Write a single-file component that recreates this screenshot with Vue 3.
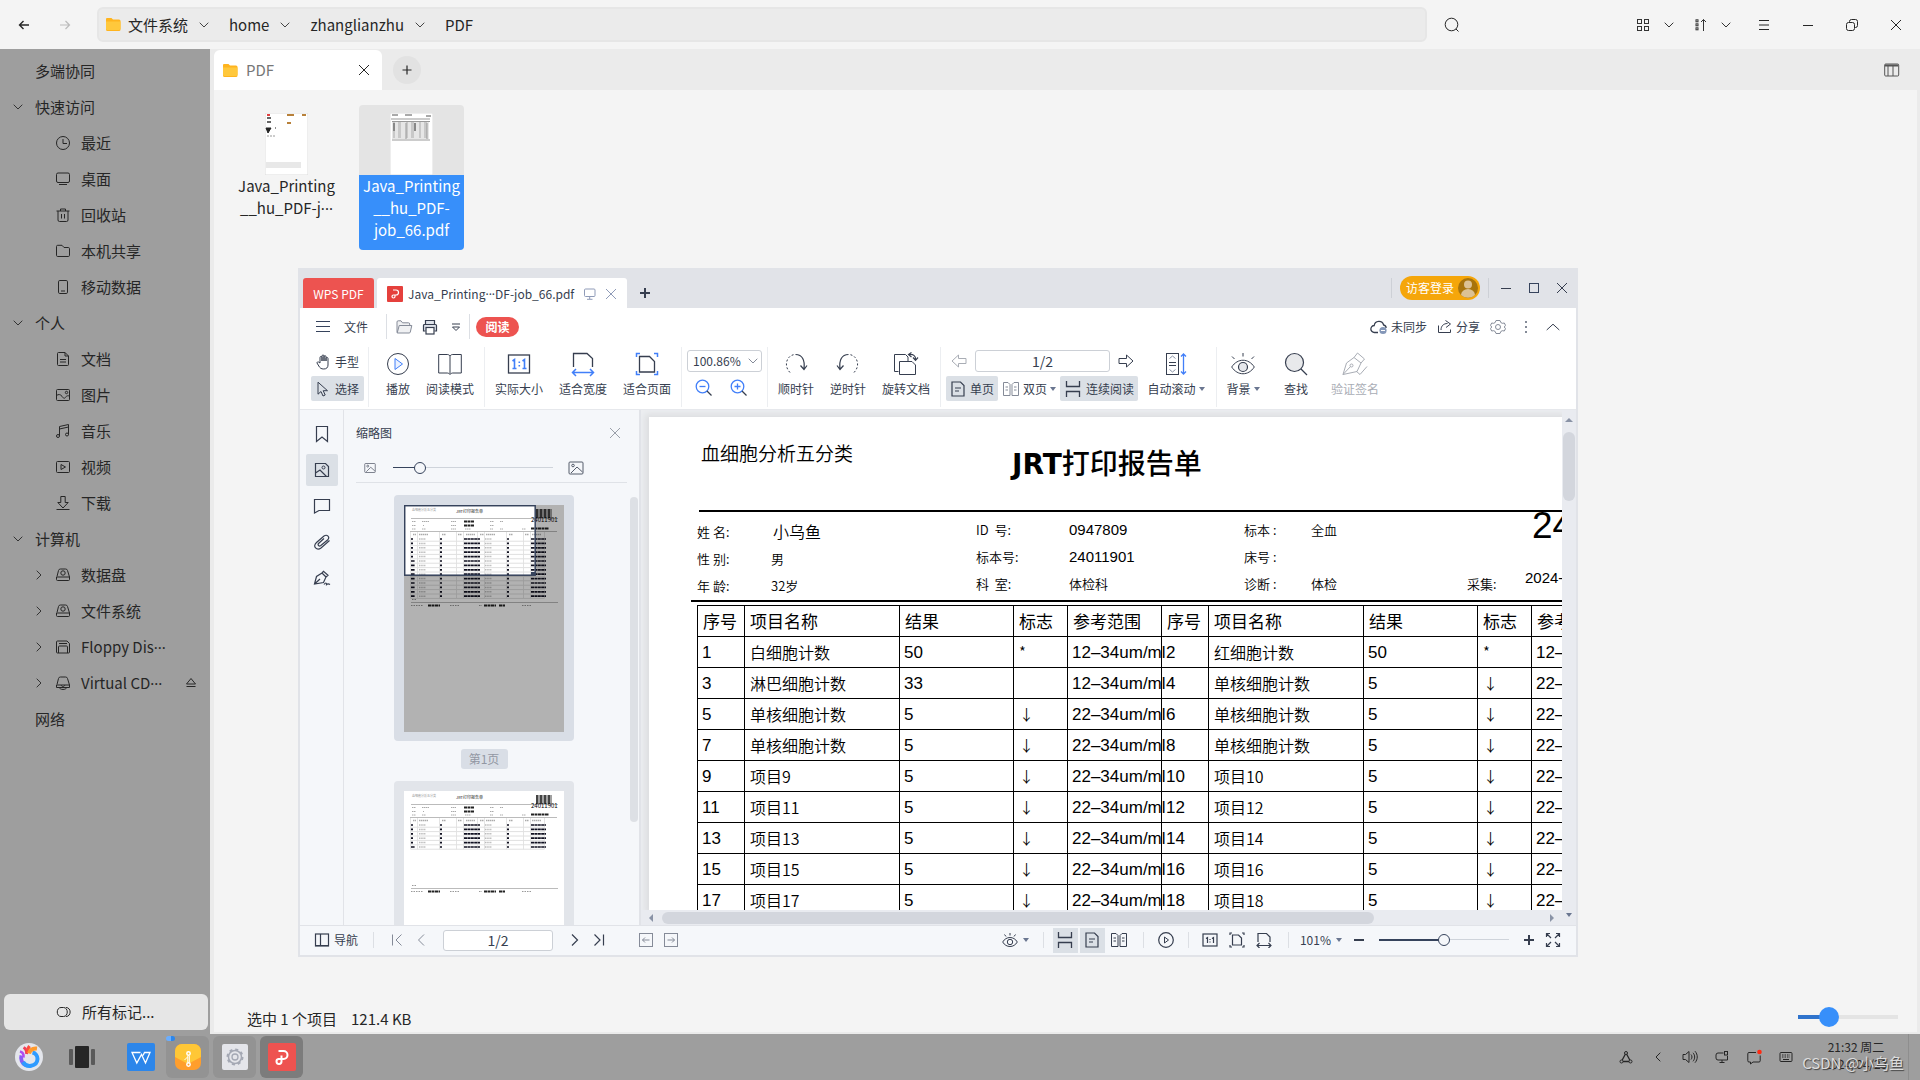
<script setup>
import { h } from 'vue'

const icons = {
  back: [14, 14, '<path d="M2.5 7H12M6.5 3 2.5 7l4 4" stroke-width="1.4"/>'],
  forward: [14, 14, '<path d="M11.5 7H2M7.500 3l4 4-4 4" stroke-width="1.2"/>'],
  down: [10, 6, '<path d="M.7.7 5 5 9.300.7"/>'],
  right: [6, 10, '<path d="M.7.7 5 5 .7 9.300"/>'],
  left: [6, 10, '<path d="M5.300.7 1 5l4.300 4.300"/>'],
  folder: [15, 13, '<path d="M1 0h4.500l1.500 1.500H13a1.500 1.500 0 0 1 1.500 1.500v8.500A1.500 1.500 0 0 1 13 13H1.500A1.500 1.500 0 0 1 0 11.500V1a1 1 0 0 1 1-1z" fill="#ffb41e" stroke="none"/><path d="M0 3.500h14.500v7A2 2 0 0 1 13 12H1.500A1.500 1.500 0 0 1 0 10.500z" fill="#ffc83c" stroke="none"/>'],
  search: [16, 16, '<circle cx="7.500" cy="7.500" r="6.300"/><path d="m12 12 2.500 2.500"/>'],
  grid: [14, 14, '<rect x="1.500" y="1.500" width="4" height="4"/><rect x="8.500" y="1.500" width="4" height="4"/><rect x="1.500" y="8.500" width="4" height="4"/><rect x="8.500" y="8.500" width="4" height="4"/>'],
  sort: [12, 14, '<rect x="1" y="1.800" width="2" height="2"/><rect x="1" y="5.800" width="2" height="2"/><rect x="1" y="9.800" width="2" height="2"/><path d="M8.500 13V1.500M6 4l2.500-2.500L11 4"/>'],
  menu: [12, 12, '<path d="M1 1.500h10M1 6h10M1 10.500h10" stroke-width="1.200"/>'],
  min: [12, 12, '<path d="M1 6.500h10"/>'],
  restore: [14, 14, '<rect x="1.500" y="4.500" width="8" height="8" rx="2"/><path d="M4.500 4.500v-1a2 2 0 0 1 2-2h4a2 2 0 0 1 2 2v4a2 2 0 0 1-2 2h-1"/>'],
  close: [12, 12, '<path d="m1 1 10 10M11 1 1 11"/>'],
  plus: [12, 12, '<path d="M6 1.500v9M1.500 6h9" stroke-width="1.200"/>'],
  columns: [16, 14, '<rect x=".7" y="1" width="14" height="12" rx="1"/><path d="M1 2.500h13" stroke-width="2"/><path d="M4 3v10M9 3v10"/>'],
  clock: [16, 16, '<circle cx="8" cy="8" r="6.500"/><path d="M8 4v4.500h4"/>'],
  desktop: [16, 16, '<rect x="1.500" y="2" width="13" height="9.500" rx="1.500"/><path d="M4 13.500h8"/>'],
  trash: [16, 16, '<path d="M1.500 4h13M5.500 4V2h5v2M3 4v9a1.500 1.500 0 0 0 1.500 1.500h7A1.500 1.500 0 0 0 13 13V4M6.500 7v4.500M9.500 7v4.500"/>'],
  share: [16, 16, '<path d="M1.500 3.500a1.200 1.200 0 0 1 1.200-1.200H7L9 4.500h4.300a1.200 1.200 0 0 1 1.200 1.200v6.600a1.200 1.200 0 0 1-1.200 1.200H2.700a1.200 1.200 0 0 1-1.200-1.200z"/>'],
  phone: [16, 16, '<rect x="3.500" y="1.500" width="9" height="13" rx="1.300"/><path d="M6 12h4"/>'],
  doc: [16, 16, '<path d="M2.500 2.500a1 1 0 0 1 1-1H10L13.500 5v8.500a1 1 0 0 1-1 1h-9a1 1 0 0 1-1-1zM10 1.500V5h3.500M5 8.500h6M5 11h6"/>'],
  image: [16, 16, '<rect x="1.500" y="2.500" width="13" height="11" rx="1"/><path d="M1.500 8.500c2-1.500 4-1.200 5.500.8s2 2.700 3.500 1 2.500-2 4-1"/><circle cx="11.500" cy="5.500" r="1.200"/>'],
  music: [16, 16, '<circle cx="3" cy="13" r="1.500"/><circle cx="12" cy="11.500" r="1.500"/><path d="M4.500 13V3.500l9-2v10M4.500 6l9-2"/>'],
  video: [16, 16, '<rect x="1.500" y="2.500" width="13" height="11" rx="1"/><path d="M6 5.500v5l4.500-2.500z"/>'],
  download: [16, 16, '<path d="M5.800 1.500h4.400v6h3L8 13 2.800 7.500h3zM1.500 14.500h13"/>'],
  disk: [16, 16, '<path d="m2 9.500 1.500-6A2 2 0 0 1 5.500 2h5a2 2 0 0 1 2 1.500L14.500 10v2.500a1 1 0 0 1-1 1h-11a1 1 0 0 1-1-1V10h13"/><circle cx="8" cy="6" r="2.200"/>'],
  floppy: [16, 16, '<path d="M1.500 3a1 1 0 0 1 1-1H12l2.500 2.500V13a1 1 0 0 1-1 1h-11a1 1 0 0 1-1-1zM3.500 14V8a1 1 0 0 1 1-1h7a1 1 0 0 1 1 1v6M4 4.500h8"/>'],
  cd: [16, 16, '<path d="m2 9.500 1.500-6A2 2 0 0 1 5.500 2h5a2 2 0 0 1 2 1.500l2 6.500v2.500h-13V10h13M4 12.500c1.500 2.600 6.500 2.600 8 0M6 10c1 2 3 2 4 0"/>'],
  eject: [12, 12, '<path d="m6 1.500 4.500 5.500h-9zM1.500 9.500h9"/>'],
  tags: [16, 12, '<path d="M5 1.500h2.500c5 0 5 9 0 9H5c-5 0-5-9 0-9zM10 1.500c5.500 0 5.500 9 0 9"/>'],
  wpsLogo: [16, 16, '<rect width="16" height="16" rx="1" fill="#e5403c" stroke="none"/><path d="M6 4h3a2.500 2.500 0 0 1 0 5H6.500a1.500 1.500 0 1 0 1.500 1.500V8.500" stroke="#fff" stroke-width="1.200"/>'],
  monitor: [14, 14, '<rect x="1.500" y="2" width="10.500" height="7.500" rx="1"/><path d="M6.700 9.500V12M4 12.300h5.500"/>'],
  openFolder: [18, 16, '<path d="M2 13.500V3a1.200 1.200 0 0 1 1.200-1.200H6l1.500 2h6A1.200 1.200 0 0 1 14.700 5v1.500M2.200 14l2-7.500h12.600l-1.500 6.600a1.200 1.200 0 0 1-1.200.9z" fill="#f0f1f3"/>'],
  printer: [16, 16, '<path d="M3.500 5V1.500h9V5M3.500 12h-2V6.500A1 1 0 0 1 2.500 5.500h11a1 1 0 0 1 1 1V12h-2" fill="#dfe3ea" stroke-width="1.200"/><rect x="4" y="8.500" width="8" height="6.500" fill="#fff" stroke-width="1.200"/>'],
  dropLine: [10, 8, '<path d="M1 1h8M1.500 4h7L5 7.500z"/>'],
  cloud: [18, 16, '<path d="M8 13.500H4.500a3.500 3.500 0 0 1-.3-7A4.800 4.800 0 0 1 13.600 6a3 3 0 0 1 2.500 3" stroke-width="1.300"/><circle cx="13" cy="11.500" r="3.600" fill="#8497b8" stroke="none"/><path d="M11 11.500h4" stroke="#fff"/>'],
  shareOut: [16, 16, '<path d="M1.500 6.500v7h12v-3M4 11c0-4 2.500-6.500 6.500-6.500M8.500 1.500l5 3.500-4.500 3.500"/>'],
  gear: [16, 16, '<path d="M6 1.500h4l.8 2 1.500.8 2-.3 1.200 2.300L14.300 8l1.200 1.700-1.200 2.300-2-.3-1.500.8-.8 2H6l-.8-2-1.500-.8-2 .3L.5 9.700 1.700 8 .5 6.300 1.700 4l2 .3 1.500-.8z"/><circle cx="8" cy="8" r="2.500"/>'],
  dots: [4, 14, '<path d="M1 2h2M1 7h2M1 12h2" stroke-width="2"/>'],
  up: [14, 8, '<path d="M.7 7 7 1.200 13.300 7"/>'],
  hand: [14, 16, '<path d="M4 9V3.500a1 1 0 0 1 2 0V7 2a1 1 0 0 1 2 0v5V2.700a1 1 0 0 1 2 0V7 4.500a1 1 0 0 1 2 0V11c0 2.500-1.500 4-4.200 4C5 15 4 14 2.800 12L1 9a1 1 0 0 1 1.500-1z"/>'],
  cursor: [14, 16, '<path d="M2 1.200v12l3-2.700 2 4.500 2.200-1-2-4.300H11.500z"/>'],
  play: [24, 24, '<circle cx="12" cy="12" r="10.500"/><path d="M9 6.500v11l7.500-5.500z" stroke="#417ff9" fill="#eaf1ff"/>'],
  book: [26, 24, '<path d="M13 4c-1-1.500-2-1.500-3-1.500H1.700v18.500H10c1 0 2 .3 3 1.500 1-1.200 2-1.500 3-1.500h8.300V2.500H16c-1 0-2 0-3 1.500zv18"/>'],
  one: [24, 24, '<rect x="1.500" y="3" width="21" height="18" stroke-width="1.300"/><path d="m5.500 9 2-1.500v9M15.500 9l2-1.500v9M5.500 16.500h4M15.500 16.500h4M12.300 9.500v1.500M12.300 13v1.500" stroke="#417ff9" stroke-width="1.600"/>'],
  fitW: [24, 24, '<path d="M2.500 15V1.500H16l5.500 5V15" stroke-width="1.300"/><path d="M1.500 20.500h21M5 17l-3.500 3.500L5 24M19 17l3.500 3.500L19 24" stroke="#417ff9" stroke-width="1.500"/>'],
  fitP: [24, 24, '<path d="M4.500 4.500h10l5 5v10.500h-15z" stroke-width="1.300"/><path d="M5 1.500H1.500V5M19 1.500h3.500V5M5 22.500H1.500V19M19 22.500h3.500V19" stroke="#417ff9" stroke-width="1.500"/>'],
  zoomOut: [18, 18, '<circle cx="7.500" cy="7.500" r="6.300" stroke="#417ff9" stroke-width="1.300"/><path d="M4.500 7.500h6" stroke="#417ff9" stroke-width="1.300"/><path d="m12 12 4.500 4.500" stroke-width="1.300"/>'],
  zoomIn: [18, 18, '<circle cx="7.500" cy="7.500" r="6.300" stroke="#417ff9" stroke-width="1.300"/><path d="M4.500 7.500h6M7.500 4.500v6" stroke="#417ff9" stroke-width="1.300"/><path d="m12 12 4.500 4.500" stroke-width="1.300"/>'],
  cw: [24, 24, '<path d="M6 20.500C-1 13.500 3 2.500 11.500 2.500" stroke-dasharray="2 2"/><path d="M11.500 2.500c7 0 9.500 6 8.500 14M16.500 13.500l3.500 4 3-4" stroke-width="1.200"/>'],
  ccw: [24, 24, '<path d="M18 20.500c7-7 3-18-5.500-18" stroke-dasharray="2 2"/><path d="M12.500 2.500C5.500 2.500 3 8.500 4 16.500M1 13.500l3 4 3.500-4" stroke-width="1.200"/>'],
  rotate: [26, 24, '<path d="M5.500 19.500h-4v-17h11l2.500 2.500v4"/><path d="M6.500 9.500h12.500l3.500 3.500v9.500h-16z" fill="#fff"/><path d="M16 2.500c4-.8 7 1.500 6.500 5M18.500.5l-3 2 3 2.500M20 5.500l2.500 2.800L25 5.500" stroke-width="1.200"/>'],
  arrowL: [16, 14, '<path d="M1 7l6.500-6v3.500H15v5H7.500V13z"/>'],
  arrowR: [16, 14, '<path d="m15 7-6.500-6v3.500H1v5h7.500V13z"/>'],
  single: [14, 16, '<path d="M1 1h8.500L13 4.500V15H1zM4 7h6M4 10h4" stroke-width="1.200"/>'],
  double: [18, 16, '<path d="M1.500 1.500H6L8 3.500v11H1.500zM10 3.500l2-2h4.500v13H10zM3.500 6h2.500M3.500 9h2.500M12 6h2.500M12 9h2.500"/>'],
  cont: [16, 16, '<path d="M1.500 0v5.500h13V0M1.500 16v-5.500h13V16" stroke-width="1.300"/>'],
  scroll: [22, 24, '<rect x="1.500" y="1.500" width="12" height="21"/><path d="M4.500 6.500 7.500 4l3 2.500M4.500 17.500l3 2.500 3-2.500" stroke="#8a93a6"/><path d="M4 10.500h7M4 13.500h7"/><path d="M18.500 2v20M16 4.500 18.500 2 21 4.500M16 19.500l2.500 2.500 2.500-2.500" stroke="#417ff9" stroke-width="1.300"/>'],
  eye: [24, 24, '<path d="M.7 15C6.500 6 17.500 6 23.300 15 17.500 24 6.500 24 .7 15zM12 1v3.500M1 4.500 3.500 7M23 4.500 20.500 7"/><circle cx="12" cy="15" r="4.500" fill="#e6e8ec" stroke-width="1.200"/>'],
  find: [24, 24, '<circle cx="10.500" cy="10.500" r="9" fill="#e8e9eb" stroke-width="1.200"/><path d="m17 17 6 6" stroke-width="1.300"/>'],
  pen: [26, 24, '<path d="M1 22.500 4.500 11l7.500-5.500 7 5.500-4 8.500zM12 5.500 15.500 1l7 6-3.500 4M1 22.500l7.500-8M14 19l4 3.500 7-8"/><circle cx="9.500" cy="13.500" r="1.500"/>'],
  bookmark: [14, 18, '<path d="M1.500 1.500h11v15L7 12l-5.500 4.500z" stroke-width="1.200"/>'],
  thumb: [16, 16, '<path d="M1.500 1.500h10l3 3v10h-13zM1.500 11 6 8l6.500 6.500" stroke-width="1.200"/><circle cx="9.500" cy="5.500" r="1.500"/>'],
  comment: [18, 16, '<path d="M1.500 1.500h15v11H6L1.500 15z" stroke-width="1.200"/>'],
  clip: [18, 16, '<path d="M11 4.500 5.500 9.500a1.500 1.500 0 0 0 2 2.200L14.500 6c3-3-.5-6-3.500-4L3.500 8.500c-4.500 4.200.5 8.500 4.500 5.500l8.500-7.500" stroke-width="1.200"/>'],
  sign: [18, 16, '<path d="M1.500 14 3.500 6.500 9 3l4 4-2.500 5.500zM9 3l1.500-1.700 4.500 4L13 7M1.500 14 7 9M11 14.500c1.500-2 2.500-2 2.500 0 1-1 2-1 3.500 0" stroke-width="1.200"/>'],
  picture: [16, 14, '<rect x="1" y="1" width="14" height="12" rx="1"/><path d="m3 12 6-6 5.500 5"/><circle cx="5" cy="4.500" r="1.300"/>'],
  nav: [16, 14, '<rect x="1.500" y="1" width="13" height="12" stroke-width="1.200"/><path d="M6.500 1v12M2 12.500h12" stroke-width="1.200"/>'],
  first: [12, 12, '<path d="M1.500.5v11M10.500.5 5 6l5.500 5.500"/>'],
  prev: [8, 12, '<path d="M7 .5 1.500 6 7 11.500"/>'],
  next: [8, 12, '<path d="m1 .5 5.500 5.500L1 11.500" stroke-width="1.200"/>'],
  last: [12, 12, '<path d="M10.500.5v11M1.500.5 7 6l-5.500 5.500" stroke-width="1.200"/>'],
  boxL: [14, 14, '<rect x=".5" y=".5" width="13" height="13"/><path d="M3.500 7h7M6 4.500 3.500 7 6 9.500"/>'],
  boxR: [14, 14, '<rect x=".5" y=".5" width="13" height="13"/><path d="M3.500 7h7M8 4.500 10.500 7 8 9.500"/>'],
  eyeS: [16, 16, '<path d="M.7 10C4 4 12 4 15.300 10 12 16 4 16 .7 10zM8 1v2.500M2.500 2.500 4 4.500M13.500 2.500 12 4.500"/><circle cx="8" cy="10" r="2.700"/>'],
  playS: [16, 16, '<circle cx="8" cy="8" r="7.300" stroke-width="1.200"/><path d="M6.500 5v6l4-3z"/>'],
  oneS: [16, 14, '<rect x="1" y="1" width="14" height="12" stroke-width="1.200"/><path d="M4 5.500 5.500 4.500v5.500M10 5.500l1.500-1v5.500M8 6v1M8 8.500v1" stroke-width="1.200"/>'],
  fitPS: [16, 16, '<path d="M3.500 3h6l3 3v7h-9zM3 1H1v2M13 1h2v2M3 15H1v-2M13 15h2v-2" stroke-width="1.200"/>'],
  fitWS: [16, 16, '<path d="M2 10V1.500h8.500L14 5v5M1 13.500h14M3.500 11 1 13.500 3.500 16M12.500 11l2.500 2.500-2.500 2.500" stroke-width="1.200"/>'],
  minusB: [10, 10, '<path d="M0 5h10" stroke-width="2"/>'],
  plusB: [10, 10, '<path d="M0 5h10M5 0v10" stroke-width="2"/>'],
  full: [16, 16, '<path d="M1.500 5V1.500H5M11 1.500h3.500V5M1.500 11v3.500H5M11 14.500h3.500V11M2 2l4 4M14 2l-4 4M2 14l4-4M14 14l-4-4" stroke-width="1.200"/>'],
  triL: [4, 8, '<path d="M4 0v8L0 4z" fill="#8a93a6" stroke="none"/>'],
  triR: [4, 8, '<path d="M0 0v8l4-4z" fill="#8a93a6" stroke="none"/>'],
  triU: [8, 4, '<path d="M0 4h8L4 0z" fill="#8a93a6" stroke="none"/>'],
  triD: [6, 4, '<path d="M0 0h6L3 4z" fill="#6a7690" stroke="none"/>'],
  start: [28, 28, '<circle cx="14" cy="14" r="14" fill="#e4e6ec" stroke="none"/><path d="M6.500 12.500a8 8 0 0 0 4 9.500" stroke="#8a5cf5" stroke-width="4"/><path d="M8 19c3 6 14 5 14.500-3a6.500 6.500 0 0 0-5-6.500" stroke="#2f9bff" stroke-width="4"/><path d="M5 8.500c2 .5 4 2 3.500 6" stroke="#b04df0" stroke-width="2.500"/><path d="M8.500 4.500c2 1 3.500 3 3 6.500" stroke="#f0405a" stroke-width="3"/><path d="M14.500 3c-1.500 2-2.500 4-2 7" stroke="#ff4a3c" stroke-width="3"/><path d="M22 5.500c-4-.5-7 1.500-8 5" stroke="#ff9a2c" stroke-width="4"/>'],
  tasks: [28, 24, '<rect x="1" y="4" width="4" height="16" rx="1" fill="#5a5a5a" stroke="none"/><rect x="7" y="1" width="14" height="22" rx="1" fill="#262626" stroke="none"/><rect x="23" y="4" width="4" height="16" rx="1" fill="#5a5a5a" stroke="none"/>'],
  writer: [28, 28, '<rect width="28" height="28" rx="2" fill="#2c86ea" stroke="none"/><path d="M13.500 9.500H5L9.800 20l4.700-8.500L18.500 20 23 9.500h-5.500l-1.500 3" stroke="#fff" stroke-width="1.300"/>'],
  files: [26, 26, '<rect width="26" height="26" rx="7" fill="#ff9e2c" stroke="none"/><path d="M7 0h12a7 7 0 0 1 7 7v6l-13 7L0 13V7a7 7 0 0 1 7-7z" fill="#ffc736" stroke="none"/><circle cx="13.500" cy="9.500" r="1.700" stroke="#fff" stroke-width="1.500"/><path d="M12.800 11.500v7M14.300 11.500v7M9.500 16l3-3" stroke="#fff"/><circle cx="13.500" cy="20.500" r="1.700" stroke="#fff" stroke-width="1.500"/>'],
  settings: [26, 26, '<rect width="26" height="26" rx="2" fill="#e4e5ea" stroke="none"/><circle cx="13" cy="13" r="6.500" stroke="#a4a8b4" stroke-width="1.500"/><circle cx="13" cy="13" r="7.500" stroke="#a4a8b4" stroke-width="2" stroke-dasharray="3 2.890"/><circle cx="13" cy="13" r="3" stroke="#a4a8b4" stroke-width="1.300"/>'],
  pdf: [28, 28, '<rect width="28" height="28" rx="2" fill="#ee5350" stroke="none"/><path d="M10.500 8h5a4 4 0 0 1 0 8h-5a2.500 2.500 0 1 0 3 2.500V12.500" stroke="#fff" stroke-width="2"/>'],
  net: [14, 14, '<circle cx="7" cy="3" r="1.500"/><circle cx="2.500" cy="11.500" r="1.500"/><circle cx="11.500" cy="11.500" r="1.500"/><path d="M6.300 4.300 3.200 10M7.700 4.300l3.100 5.700M4 11.500h6" stroke-width="1.300"/>'],
  sound: [16, 14, '<path d="M1 4.500h2.500L7 1.500v11L3.500 9.500H1zM9 4.500c1.300 1.500 1.300 3.500 0 5M11 2.800c2.200 2.500 2.200 6 0 8.500M13 1.200c3 3.500 3 8 0 11.500"/>'],
  screen: [14, 14, '<path d="M8.500 3H3a2 2 0 0 0-2 2v3a2 2 0 0 0 2 2h9.500V6M7 10v2.500M4.500 12.500h5"/><rect x="9.500" y="1.500" width="3" height="3.500"/>'],
  message: [16, 16, '<path d="M10 3.500H3a1.200 1.200 0 0 0-1.200 1.200v7A1.200 1.200 0 0 0 3 13h1.500v2l2.500-2h6a1.200 1.200 0 0 0 1.200-1.200V6.500"/><circle cx="13.500" cy="3" r="2.300" fill="#ff2a12" stroke="none"/>'],
  keyboard: [14, 12, '<rect x="1" y="1.500" width="12" height="9" rx="1"/><path d="M3 4h8M3 6h8" stroke-dasharray="1.500 1"/><path d="M4 8.500h6"/>'],
}

const Ico = (props) => {
  const [w, ht, body] = icons[props.n]
  return h('svg', {
    width: w, height: ht, viewBox: `0 0 ${w} ${ht}`, fill: 'none', stroke: 'currentColor',
    'aria-hidden': 'true', class: 'ico', innerHTML: body,
  })
}
Ico.props = ['n']

const crumbs = ['文件系统', 'home', 'zhanglianzhu', 'PDF']

const places = [
  { t: '多端协同' },
  { t: '快速访问', open: true },
  { t: '最近', i: 'clock' },
  { t: '桌面', i: 'desktop' },
  { t: '回收站', i: 'trash' },
  { t: '本机共享', i: 'share' },
  { t: '移动数据', i: 'phone' },
  { t: '个人', open: true },
  { t: '文档', i: 'doc' },
  { t: '图片', i: 'image' },
  { t: '音乐', i: 'music' },
  { t: '视频', i: 'video' },
  { t: '下载', i: 'download' },
  { t: '计算机', open: true },
  { t: '数据盘', i: 'disk', sub: true },
  { t: '文件系统', i: 'disk', sub: true },
  { t: 'Floppy Dis', cut: true, i: 'floppy', sub: true },
  { t: 'Virtual CD', cut: true, i: 'cd', sub: true, eject: true },
  { t: '网络' },
]

const names = ['白细胞计数', '红细胞计数', '淋巴细胞计数', '单核细胞计数', '单核细胞计数', '单核细胞计数', '单核细胞计数', '单核细胞计数']
const item = (n) => ({
  no: n,
  name: names[n - 1] ?? `项目${n}`,
  val: n < 3 ? '50' : n === 3 ? '33' : '5',
  flag: n < 3 ? '*' : n === 3 ? '' : '↓',
  range: n < 4 ? '12–34um/ml' : '22–34um/ml',
})
const rows = Array.from({ length: 10 }, (_, i) => [item(i * 2 + 1), item(i * 2 + 2)])
const heads = ['序号', '项目名称', '结果', '标志', '参考范围']

const sheets = [
  { n: 14, active: true },
  { n: 6, active: false },
]
const cols = [7, 14, 36, 53, 60, 74, 81, 103, 120, 127, 141]
</script>

<template>
  <div class="desktop">
    <header class="bar">
      <button class="ib back" aria-label="后退"><Ico n="back" /></button>
      <button class="ib fwd" aria-label="前进"><Ico n="forward" /></button>
      <nav class="address" aria-label="路径">
        <Ico n="folder" />
        <template v-for="(c, i) in crumbs" :key="c">
          <a href="#">{{ c }}</a>
          <Ico v-if="i < 3" n="down" class="cdown" />
        </template>
      </nav>
      <button class="ib find" aria-label="搜索"><Ico n="search" /></button>
      <div class="wctl">
        <button class="ib pair" aria-label="视图"><Ico n="grid" /><Ico n="down" /></button>
        <button class="ib pair" aria-label="排序"><Ico n="sort" /><Ico n="down" /></button>
        <button class="ib" aria-label="菜单"><Ico n="menu" /></button>
        <button class="ib" aria-label="最小化"><Ico n="min" /></button>
        <button class="ib" aria-label="还原"><Ico n="restore" /></button>
        <button class="ib" aria-label="关闭"><Ico n="close" /></button>
      </div>
    </header>

    <div class="middle">
      <aside class="side">
        <ul class="places">
          <li v-for="(p, i) in places" :key="i">
            <span class="tog" :class="{ deep: p.sub }">
              <Ico v-if="p.open" n="down" /><Ico v-if="p.sub" n="right" />
            </span>
            <span v-if="p.i" class="pic"><Ico :n="p.i" /></span>
            <a href="#">{{ p.t }}<span v-if="p.cut" class="el">···</span></a>
            <button v-if="p.eject" class="ib eject" aria-label="弹出"><Ico n="eject" /></button>
          </li>
        </ul>
        <button class="tags"><Ico n="tags" />所有标记...</button>
      </aside>

      <main class="content">
        <div class="tabs">
          <div class="tab">
            <Ico n="folder" /><span>PDF</span>
            <button class="ib" aria-label="关闭标签"><Ico n="close" /></button>
          </div>
          <button class="ib add" aria-label="新标签"><Ico n="plus" /></button>
          <button class="ib cols" aria-label="预览"><Ico n="columns" /></button>
        </div>
        <div class="files">
          <figure class="file">
            <svg width="43" height="62" viewBox="0 0 43 62" aria-hidden="true">
              <rect width="43" height="62" fill="#fff" stroke="#ddd" />
              <path d="M2 2h3" stroke="#e04040" stroke-width="2" />
              <path d="M2 5h4M2 9h4" stroke="#666" stroke-width="2" />
              <path d="M22 2h7M37 2h4M22 10h4" stroke="#b8813a" stroke-width="2" />
              <path d="M1 15h5l-3 5zM10 15h1" stroke="#222" fill="#222" />
              <path d="M2 23h9" stroke="#999" stroke-dasharray="2 1" />
              <path d="M1 49h35v6H1z" fill="#e8e8e8" />
            </svg>
            <figcaption>Java_Printing<br />__hu_PDF-j<span class="el">···</span></figcaption>
          </figure>
          <figure class="file on">
            <svg width="43" height="62" viewBox="0 0 43 62" aria-hidden="true">
              <rect width="43" height="62" fill="#fff" stroke="#ddd" />
              <path d="M2 2h6M15 2h7M36 3h5" stroke="#555" />
              <path d="M1 6h39M2 8.500h38M2 27h38" stroke="#999" />
              <rect x="2" y="9" width="37" height="17" fill="#e6e6e6" />
              <path v-for="y in 8" :key="y" :d="`M3 ${8 + y * 2}h34`" stroke="#aaa" stroke-dasharray="2 3 3 5" />
              <path d="M4 10v8M25 10v8" stroke="#888" stroke-width="2" />
              <path d="M16 10v16M37 10v16" stroke="#999" />
            </svg>
            <figcaption>Java_Printing<br />__hu_PDF-<br />job_66.pdf</figcaption>
          </figure>
        </div>
        <footer class="status">
          <span>选中 1 个项目</span><span>121.4 KB</span>
          <input type="range" class="size" min="0" max="100" value="26" aria-label="图标大小" />
        </footer>
      </main>
    </div>

    <footer class="task">
      <button class="tk" aria-label="开始"><Ico n="start" /></button>
      <button class="tk tview" aria-label="任务视图"><Ico n="tasks" /></button>
      <button class="tk" aria-label="WPS 文字"><Ico n="writer" /></button>
      <button class="tk lit" aria-label="文件"><Ico n="files" /><i class="pips"></i></button>
      <button class="tk lit" aria-label="设置"><Ico n="settings" /></button>
      <button class="tk lit hot" aria-label="WPS PDF"><Ico n="pdf" /></button>
      <div class="tray">
        <button v-for="n in ['net', 'left', 'sound', 'screen', 'message', 'keyboard']" :key="n" class="ib" :aria-label="n"><Ico :n="n" /></button>
      </div>
      <div class="clock"><span>21:32 周二</span><span>2024/04/23</span><b class="mark">CSDN @小乌鱼</b></div>
    </footer>

    <section class="wps" aria-label="WPS PDF">
      <header class="wtitle">
        <button class="home">WPS PDF</button>
        <div class="wtab">
          <Ico n="wpsLogo" /><span class="wname">Java_Printing<span class="el">···</span>DF-job_66.pdf</span>
          <Ico n="monitor" class="pale" /><button class="ib pale" aria-label="关闭文档"><Ico n="close" /></button>
        </div>
        <button class="ib wadd" aria-label="新建"><Ico n="plusB" /></button>
        <div class="wright">
          <button class="login">访客登录
            <svg width="20" height="20" viewBox="0 0 20 20" aria-hidden="true"><circle cx="10" cy="10" r="10" fill="#a8740c" /><circle cx="10" cy="6.500" r="4" fill="#dcc193" /><path d="M3 17a7 6 0 0 1 14 0 10 10 0 0 1-14 0z" fill="#dcc193" /></svg>
          </button>
          <div class="wbtns">
            <button class="ib" aria-label="最小化"><Ico n="min" /></button>
            <button class="ib" aria-label="最大化"><i class="sq"></i></button>
            <button class="ib" aria-label="关闭"><Ico n="close" /></button>
          </div>
        </div>
      </header>

      <div class="wmenu">
        <button class="ib burger" aria-label="菜单"><i></i><i></i><i></i></button>
        <button class="ib">文件</button>
        <div class="quick">
          <button class="ib soft" aria-label="打开"><Ico n="openFolder" /></button>
          <button class="ib" aria-label="打印"><Ico n="printer" /></button>
          <button class="ib" aria-label="更多"><Ico n="dropLine" /></button>
        </div>
        <button class="read">阅读</button>
        <div class="mright">
          <button class="ib"><Ico n="cloud" />未同步</button>
          <button class="ib"><Ico n="shareOut" />分享</button>
          <button class="ib soft" aria-label="设置"><Ico n="gear" /></button>
          <button class="ib soft" aria-label="更多"><Ico n="dots" /></button>
          <button class="ib" aria-label="收起"><Ico n="up" /></button>
        </div>
      </div>

      <div class="ribbon">
        <div class="grp g1">
          <button class="sm"><Ico n="hand" />手型</button>
          <button class="sm on"><Ico n="cursor" />选择</button>
        </div>
        <div class="grp g2">
          <button class="big w40"><Ico n="play" /><span>播放</span></button>
          <button class="big w64"><Ico n="book" /><span>阅读模式</span></button>
        </div>
        <div class="grp">
          <button class="big w64"><Ico n="one" /><span>实际大小</span></button>
          <button class="big w64"><Ico n="fitW" /><span>适合宽度</span></button>
          <button class="big w64"><Ico n="fitP" /><span>适合页面</span></button>
        </div>
        <div class="grp g4">
          <div class="combo"><select aria-label="缩放比例"><option>100.86%</option></select><Ico n="down" /></div>
          <div class="zooms">
            <button class="ib" aria-label="缩小"><Ico n="zoomOut" /></button>
            <button class="ib" aria-label="放大"><Ico n="zoomIn" /></button>
          </div>
        </div>
        <div class="grp">
          <button class="big w52"><Ico n="cw" /><span>顺时针</span></button>
          <button class="big w52"><Ico n="ccw" /><span>逆时针</span></button>
          <button class="big w64"><Ico n="rotate" /><span>旋转文档</span></button>
        </div>
        <div class="grp g6">
          <div class="modes">
            <div class="pager">
              <button class="ib faint" aria-label="上一页"><Ico n="arrowL" /></button>
              <input type="text" value="1/2" aria-label="页码" />
              <button class="ib" aria-label="下一页"><Ico n="arrowR" /></button>
            </div>
            <div class="views">
              <button class="sm on"><Ico n="single" />单页</button>
              <button class="sm bare soft"><Ico n="double" /><span class="dk">双页</span><Ico n="triD" /></button>
              <button class="sm on"><Ico n="cont" />连续阅读</button>
            </div>
          </div>
          <button class="big w64"><Ico n="scroll" /><span>自动滚动<Ico n="triD" /></span></button>
        </div>
        <div class="grp g7">
          <button class="big w52"><Ico n="eye" /><span>背景<Ico n="triD" /></span></button>
          <button class="big w52"><Ico n="find" /><span>查找</span></button>
          <button class="big w64 faint"><Ico n="pen" /><span>验证签名</span></button>
        </div>
      </div>

      <div class="wbody">
        <div class="rail">
          <button class="ib" aria-label="书签"><Ico n="bookmark" /></button>
          <button class="ib on" aria-label="缩略图"><Ico n="thumb" /></button>
          <button class="ib" aria-label="批注"><Ico n="comment" /></button>
          <button class="ib" aria-label="附件"><Ico n="clip" /></button>
          <button class="ib" aria-label="签名"><Ico n="sign" /></button>
        </div>
        <div class="panel">
          <div class="phead"><span>缩略图</span><button class="ib" aria-label="关闭面板"><Ico n="close" /></button></div>
          <div class="psize">
            <svg width="12" height="12" viewBox="0 0 16 14" fill="none" stroke="currentColor" aria-hidden="true" v-html="icons.picture[2]"></svg>
            <input type="range" class="thin" min="0" max="100" value="14" aria-label="缩略图大小" />
            <Ico n="picture" />
          </div>
          <div class="plist">
            <template v-for="(s, k) in sheets" :key="k">
              <div class="sheet" :class="{ now: s.active }">
                <svg width="160" height="227" viewBox="0 0 160 227" aria-hidden="true">
                  <rect width="160" height="227" fill="#fff" />
                  <text x="8" y="6" font-size="3" fill="#999">血细胞分析五分类</text>
                  <text x="52" y="8" font-size="4" fill="#222">JRT打印报告单</text>
                  <path d="M7 13.500h147M6 26.500h147M7 97.500h147" stroke="#bbb" />
                  <path d="M8 16.500h4M18 16.500h7M47 16.500h5M86 16.500h4M96 16.500h3M8 20.500h4M19 20.500h1M47 20.500h5M86 20.500h4M8 24h4M18 24h4M47 24h5M61 24h6M86 24h3M96 24h3M118 24h4" stroke="#aaa" stroke-dasharray="1.500 .5" />
                  <path d="M60 16.500h10M60 20.500h10M127 23.500h18M24 100.500h12M80 100.500h12M95 100.500h6" stroke="#222" stroke-width="2" stroke-dasharray="3 .5" />
                  <path d="M7 100.500h12M46 100.500h10M75 100.500h3M118 100.500h9M8 94.500h4" stroke="#999" stroke-dasharray="1.500 1" />
                  <path d="M132 8.500h16" stroke="#444" stroke-width="9" stroke-dasharray="2 .5 1 .5" />
                  <text x="127" y="17" font-size="6">24011901</text>
                  <path v-for="x in cols" :key="x" :d="`M${x - 0.5} 27v${5 + s.n * 4.4}`" stroke="#e4e4e4" />
                  <path d="M9 29.500h3M15 29.500h9M38 29.500h4M54 29.500h4M62 29.500h9M76 29.500h4M82 29.500h9M105 29.500h4M121 29.500h4M128 29.500h9" stroke="#aaa" stroke-width="1.500" stroke-dasharray="1.500 .5" />
                  <g v-for="r in s.n" :key="r" :transform="`translate(0 ${29.6 + r * 4.4})`">
                    <path d="M7 2.200h133" stroke="#e0e0e0" />
                    <path :d="`M7 0h${r > 5 ? 4 : 2}M36 0h2M60 0h16M103 0h2M127 0h15`" stroke="#101020" stroke-width="1.700" stroke-dasharray="3 .4" />
                    <path d="M15 0h7M81 0h7" stroke="#bbb" stroke-width="1.500" stroke-dasharray="1.500 .7" />
                  </g>
                  <template v-if="s.active">
                    <path d="M132 0h28v227H0V70h132z" fill="#000" fill-opacity=".3" />
                    <rect x=".7" y=".7" width="130.500" height="69.500" fill="none" stroke="#36435c" stroke-width="1.500" />
                    <path d="M127 67h4v3h-4z" fill="#36435c" />
                  </template>
                </svg>
              </div>
              <span v-if="s.active" class="plabel">第1页</span>
            </template>
          </div>
          <i class="pbar"></i>
        </div>

        <div class="view">
          <div class="canvas">
            <article class="page">
              <div class="ptop">
                <span class="kind">血细胞分析五分类</span>
                <h1><b>JRT</b>打印报告单</h1>
              </div>
              <div class="info">
                <div class="c1 low"><p>姓&nbsp;名:</p><p>性&nbsp;别:</p><p>年&nbsp;龄:</p></div>
                <div class="c2 low"><p class="who">小乌鱼</p><p>男</p><p>32岁</p></div>
                <div class="c3"><p>ID&nbsp; 号:</p><p>标本号:</p><p>科&nbsp; 室:</p></div>
                <div class="c4"><p class="num">0947809</p><p class="num">24011901</p><p>体检科</p></div>
                <div class="c5"><p>标本 :</p><p>床号 :</p><p>诊断 :</p></div>
                <div class="c6"><p>全血</p><p>&nbsp;</p><p>体检</p></div>
                <div class="c7"><p>&nbsp;</p><p>&nbsp;</p><p>采集:</p></div>
                <div class="c8"><p class="code">24011901</p><p>&nbsp;</p><p class="num date">2024-01-19</p></div>
              </div>
              <table>
                <colgroup>
                  <template v-for="k in 2" :key="k"><col class="k1" /><col class="k2" /><col class="k3" /><col class="k4" /><col class="k5" /></template>
                </colgroup>
                <thead>
                  <tr><template v-for="k in 2" :key="k"><th v-for="t in heads" :key="t">{{ t }}</th></template></tr>
                </thead>
                <tbody>
                  <tr v-for="(r, i) in rows" :key="i">
                    <template v-for="c in r" :key="c.no">
                      <td class="n">{{ c.no }}</td><td>{{ c.name }}</td><td class="n">{{ c.val }}</td><td class="flag">{{ c.flag }}</td><td class="n">{{ c.range }}</td>
                    </template>
                  </tr>
                </tbody>
              </table>
            </article>
          </div>
          <div class="vbar"><Ico n="triU" /><i></i><Ico n="triD" /></div>
          <div class="hbar"><Ico n="triL" /><div><i></i></div><Ico n="triR" /></div>
        </div>
      </div>

      <footer class="wfoot">
        <button class="ib navb"><Ico n="nav" />导航</button>
        <div class="fnav">
          <button class="ib soft" aria-label="首页"><Ico n="first" /></button>
          <button class="ib soft" aria-label="上一页"><Ico n="prev" /></button>
          <input type="text" value="1/2" aria-label="当前页" />
          <button class="ib" aria-label="下一页"><Ico n="next" /></button>
          <button class="ib" aria-label="末页"><Ico n="last" /></button>
        </div>
        <div class="fhist">
          <button class="ib soft" aria-label="后退"><Ico n="boxL" /></button>
          <button class="ib soft" aria-label="前进"><Ico n="boxR" /></button>
        </div>
        <div class="fright">
          <div class="fg"><button class="ib" aria-label="护眼"><Ico n="eyeS" /><Ico n="triD" /></button></div>
          <div class="fg tight">
            <button class="ib on" aria-label="连续"><Ico n="cont" /></button>
            <button class="ib on" aria-label="单页"><Ico n="single" /></button>
            <button class="ib" aria-label="双页"><Ico n="double" /></button>
          </div>
          <div class="fg"><button class="ib" aria-label="播放"><Ico n="playS" /></button></div>
          <div class="fg tight">
            <button class="ib" aria-label="实际大小"><Ico n="oneS" /></button>
            <button class="ib" aria-label="适合页面"><Ico n="fitPS" /></button>
            <button class="ib" aria-label="适合宽度"><Ico n="fitWS" /></button>
          </div>
          <div class="fzoom">
            <button class="ib pct">101%<Ico n="triD" /></button>
            <button class="ib" aria-label="缩小"><Ico n="minusB" /></button>
            <input type="range" class="thin" min="0" max="100" value="50" aria-label="缩放" />
            <button class="ib" aria-label="放大"><Ico n="plusB" /></button>
            <button class="ib" aria-label="全屏"><Ico n="full" /></button>
          </div>
        </div>
      </footer>
    </section>
  </div>
</template>

<style>
body { margin: 0; overflow: hidden; }
</style>

<style scoped>
* { box-sizing: border-box; }
.desktop { position: relative; height: 100vh; display: flex; flex-direction: column; background: #f4f4f4; color: #262626; font: 15px/22px "Noto Sans CJK SC", "Noto Sans", sans-serif; overflow: hidden; }
button, input, select { font: inherit; color: inherit; }
button { border: 0; background: none; padding: 0; white-space: nowrap; }
a { color: inherit; text-decoration: none; white-space: nowrap; }
.el { font-family: "Noto Sans", sans-serif; line-height: 1; }
.ico { display: block; flex: none; }
.ib { display: inline-flex; align-items: center; justify-content: center; }

.bar { height: 49px; display: flex; align-items: center; padding-right: 2px; }
.back { width: 48px; }
.fwd { width: 34px; color: #bbb; }
.address { flex: 0 1 1330px; margin-left: 15px; height: 35px; display: flex; align-items: center; padding-left: 7px; background: #ebebeb; border: 2px solid #e6e6e6; border-radius: 6px; }
.address a { margin-left: 7px; }
.cdown { margin: 0 13px 0 11px; color: #444; }
.find { margin-left: 17px; }
.wctl { margin-left: auto; display: flex; align-items: center; }
.wctl .ib { width: 44px; }
.wctl .pair { width: 58px; gap: 14px; color: #333; }

.middle { flex: 1; display: flex; min-height: 0; }
.side { width: 210px; flex: none; background: #9e9e9e; display: flex; flex-direction: column; justify-content: space-between; padding: 4px 2px 4px 4px; }
.places { list-style: none; margin: 0; padding: 0; }
.places li { height: 36px; display: flex; align-items: center; }
.tog { width: 31px; flex: none; padding-left: 9px; color: #333; }
.deep { padding-left: 32px; width: 51px; }
.pic { width: 46px; flex: none; padding-left: 20px; }
.deep + .pic { width: 26px; padding-left: 0; }
.eject { margin: 0 11px 0 auto; }
.tags { height: 36px; background: #e6e6e6; border-radius: 6px; display: flex; align-items: center; gap: 10px; padding-left: 52px; }

.content { flex: 1; min-width: 0; display: flex; flex-direction: column; border: solid #ebebeb; border-width: 0 3px 2px 4px; }
.tabs { height: 41px; background: #ebebeb; display: flex; align-items: center; padding-right: 17px; }
.tab { width: 168px; height: 40px; align-self: flex-end; background: #fff; border-radius: 6px 6px 0 0; display: flex; align-items: center; padding: 0 12px 0 9px; gap: 8px; color: #777; }
.tab .ib { margin-left: auto; color: #262626; }
.add { margin-left: 11px; width: 28px; height: 28px; border-radius: 50%; background: #e2e2e2; }
.cols { margin-left: auto; color: #555; }
.files { flex: 1; display: flex; align-items: flex-start; gap: 20px; padding: 15px 20px; }
.file { margin: 0; width: 105px; border-radius: 4px; overflow: hidden; text-align: center; white-space: nowrap; }
.file svg { display: block; margin: 8px auto 0; }
.on.file { background: #e4e4e4; }
.on.file figcaption { background: #378ffa; color: #fff; padding-bottom: 9px; }
.status { display: flex; align-items: center; gap: 14px; height: 26px; padding: 0 17px 0 33px; }
.size { margin-left: auto; width: 100px; }
input[type="range"] { appearance: none; height: 20px; margin-block: 0; background: linear-gradient(#2f73cc, #2f73cc) 0 8px / 26% 4px no-repeat, linear-gradient(#e4e4e4, #e4e4e4) 0 8px / 100% 4px no-repeat; }
input[type="range"]::-webkit-slider-thumb { appearance: none; width: 20px; height: 20px; border-radius: 50%; background: #378ffa; }
.status .size { margin-bottom: 4px; }

.task { height: 46px; flex: none; background: #9e9e9e; display: flex; align-items: center; gap: 4px; padding-left: 7px; }
.tk { width: 43px; height: 42px; display: flex; align-items: center; justify-content: center; border-radius: 6px; position: relative; }
.tview { margin: 0 12px 0 6px; }
.lit { background: #939393; }
.hot { background: #7c7c7c; }
.pips { position: absolute; left: 0; top: 0; width: 9px; height: 5px; border-radius: 3px; background: linear-gradient(90deg, #6aaeff 50%, #2c86ea 50%); }
.tray { margin-left: auto; display: flex; }
.tray .ib { width: 32px; height: 32px; }
.clock { position: relative; width: 103px; margin: 0 11px 0 0; display: flex; flex-direction: column; align-items: center; font-size: 12px; line-height: 17px; border-right: 1px solid #8e8e8e; height: 46px; padding: 4px 2px 0 0; }
.mark { position: absolute; right: 4px; top: 20px; font-weight: 400; font-size: 15px; line-height: 18px; color: #dcdcdc; text-shadow: 1px 1px 1px #444; white-space: nowrap; }

.wps { position: absolute; inset: 268px 342px 123px 298px; display: flex; flex-direction: column; background: #f5f7fa; border: 2px solid #e1e3e8; border-top: 0; color: #363e4f; font-size: 12px; line-height: 16px; }
.wtitle { height: 40px; flex: none; display: flex; align-items: flex-end; background: #e1e3e8; padding-left: 3px; }
.home { width: 71px; height: 30px; padding-top: 2px; background: #ed5350; color: #fff; border-radius: 3px 3px 0 0; }
.wtab { margin-left: 3px; width: 250px; height: 30px; background: #fff; border-radius: 3px 3px 0 0; display: flex; align-items: center; padding: 2px 10px 0; gap: 5px; }
.wname { flex: 1; white-space: nowrap; }
.wtab .ib { margin-left: 3px; }
.pale { color: #8f9bb8; }
.wadd { margin: 0 0 10px 13px; }
.wright { margin-left: auto; height: 40px; display: flex; align-items: center; padding: 0 8px 0 0; }
.login { width: 80px; height: 24px; border-radius: 12px; background: #f5a60a; color: #fff; display: flex; align-items: center; justify-content: space-between; padding: 0 2px 0 6px; }
.wright::before { content: ""; width: 1px; height: 20px; background: #cdd0d6; margin-right: 8px; }
.wbtns { margin-left: 8px; display: flex; align-items: center; gap: 17px; height: 20px; border-left: 1px solid #cdd0d6; padding-left: 11px; }
.sq { width: 10px; height: 10px; border: 1px solid #36435c; }

.wmenu { height: 37px; flex: none; background: #fff; display: flex; align-items: center; padding: 0 16px; }
.burger { flex-direction: column; gap: 4px; width: 14px; margin-right: 14px; }
.burger i { width: 14px; height: 1px; background: #36435c; }
.quick { display: flex; align-items: center; height: 25px; margin-left: 18px; padding: 0 8px; gap: 9px; border: solid #dcdfe4; border-width: 0 1px; width: 84px; }
.quick .ib:last-child { margin-left: auto; }
.soft { color: #858b98; }
.read { margin-left: 6px; width: 43px; height: 20px; line-height: 20px; border-radius: 10px; background: #ed5350; color: #fff; font-weight: 700; }
.mright { margin-left: auto; display: flex; align-items: center; gap: 10px; }
.mright .ib { gap: 3px; }
.mright .ib:nth-child(n + 4) { margin-left: 8px; }

.ribbon { height: 65px; flex: none; background: #fff; display: flex; border-bottom: 1px solid #e6e8ec; padding: 2px 0; }
.grp { display: flex; padding: 0 2px; border-right: 1px solid #eceef1; }
.g1 { flex-direction: column; width: 69px; padding: 2px 4px 0 11px; gap: 2px; }
.g2 { padding-left: 9px; }
.g4 { flex-direction: column; width: 86px; padding: 3px 5px; }
.g6 { padding: 0 8px 0 5px; }
.g7 { border: 0; padding-left: 0; gap: 1px; }
.sm { display: flex; align-items: center; gap: 5px; height: 25px; padding: 0 5px; border-radius: 2px; }
.on.sm, .rail .on, .fg .on { background: #dbe0e6; }
.big { display: flex; flex-direction: column; align-items: center; padding-top: 5px; gap: 5px; }
.big span, .bare { display: flex; align-items: center; gap: 3px; }
.big .ico { overflow: visible; }
.w40 { width: 40px; }
.w52 { width: 52px; }
.w64 { width: 64px; }
.faint { color: #a9adb5; }
.combo { position: relative; height: 22px; }
.combo select { appearance: none; width: 75px; height: 22px; border: 1px solid #ccd0d6; border-radius: 3px; background: #fff; padding: 0 0 0 5px; line-height: 20px; }
.combo .ico { position: absolute; right: 4px; top: 8px; color: #858b98; }
.zooms { display: flex; gap: 17px; padding: 7px 0 0 8px; }
.modes { width: 198px; padding-top: 3px; }
.pager { display: flex; align-items: center; padding-left: 5px; gap: 8px; }
.pager input { width: 135px; height: 22px; }
input[type="text"] { border: 1px solid #ccd0d6; border-radius: 3px; background: #fff; text-align: center; font-size: 14px; padding: 0; }
.views { display: flex; gap: 4px; margin-top: 4px; }
.views .sm { padding: 0 4px 0 5px; gap: 5px; }
.views .bare { padding: 0; gap: 3px; }
.dk { color: #363e4f; }

.wbody { flex: 1; display: flex; min-height: 0; }
.rail { width: 44px; flex: none; border-right: 1px solid #e1e3e8; display: flex; flex-direction: column; align-items: center; padding-top: 8px; gap: 4px; }
.rail .ib { width: 32px; height: 32px; border-radius: 2px; }
.panel { position: relative; width: 297px; flex: none; display: flex; flex-direction: column; border-right: 2px solid #e1e3e8; padding: 0 12px; min-height: 0; }
.phead { height: 46px; flex: none; display: flex; align-items: center; justify-content: space-between; padding: 0 6px 0 0; }
.phead .ib { color: #9a9fa9; }
.psize { height: 27px; flex: none; display: flex; align-items: center; padding: 0 43px 3px 8px; border-bottom: 1px solid #dfe2e7; color: #555c6b; }
.psize .thin { flex: 1; min-width: 0; margin: 0 15px 0 17px; }
input.thin { background: linear-gradient(#36435c, #36435c) 0 9px / 14% 1px no-repeat, linear-gradient(#cfd4db, #cfd4db) 0 9px / 100% 1px no-repeat; }
input.thin::-webkit-slider-thumb { width: 12px; height: 12px; background: #f5f7fa; border: 1px solid #36435c; }
.plist { flex: 1; overflow: hidden; padding-top: 12px; display: flex; flex-direction: column; align-items: center; min-height: 0; padding-right: 15px; }
.sheet { flex: none; padding: 10px 10px 9px; background: #e2e5ea; border-radius: 4px; }
.now { background: #d9dee6; }
.sheet svg { display: block; }
.plabel { flex: none; width: 47px; height: 20px; line-height: 20px; text-align: center; background: #d9dee6; border-radius: 3px; color: #9297a3; margin: 8px 0 12px; }
.pbar { position: absolute; right: 1px; top: 87px; width: 8px; height: 325px; border-radius: 4px; background: #dde0e5; }

.view { flex: 1; min-width: 0; display: grid; grid-template: 1fr 15px / 1fr 14px; background: #e9ebf0; }
.canvas { overflow: hidden; background: #dddee0; padding: 7px 0 0 8px; box-shadow: inset 4px 4px 6px #eceef1; }
.page { width: 1122px; height: 1400px; background: #fff; color: #000; font-family: "Noto Sans CJK SC", sans-serif; font-weight: 350; padding-left: 42px; }
.ptop { height: 95px; margin-left: 8px; display: flex; border-bottom: 2px solid #000; }
.kind { font-size: 19px; line-height: 28px; padding: 22px 0 0 2px; width: 313px; }
h1 { margin: 0; font-size: 28px; line-height: 40px; font-weight: 500; padding-top: 25px; }
h1 b { font-family: "DejaVu Sans", sans-serif; font-weight: 700; }
.info { height: 90px; border-bottom: 2px solid #000; display: flex; padding: 4px 0 0 6px; white-space: nowrap; font-size: 13px; line-height: 27px; }
.info p { margin: 0; height: 27px; }
.info div { flex: none; }
.info .low { padding-top: 2px; }
.c1 { width: 74px; } .c2 { width: 205px; } .c3 { width: 93px; } .c4 { width: 175px; }
.c5 { width: 67px; } .c6 { width: 156px; } .c7 { width: 58px; }
.who { font-size: 16px; padding-left: 2px; }
.num { font: 15px/27px "Liberation Sans", sans-serif; }
.code { font: 37px/20px "Liberation Sans", sans-serif; padding-left: 7px; }
.date { line-height: 16px; }
table { margin: 3px 0 0 6px; border-collapse: collapse; table-layout: fixed; width: 928px; }
.k1 { width: 47px; } .k2 { width: 155px; } .k3 { width: 114px; } .k4 { width: 54px; } .k5 { width: 94px; }
th, td { height: 31px; padding: 0 0 0 5px; border: 1px solid #000; text-align: left; font-weight: 350; font-size: 16px; line-height: 28px; white-space: nowrap; }
th { font-size: 17px; font-weight: 400; }
.flag { font-size: 15px; }
.n { font-family: "Liberation Sans", sans-serif; font-size: 17px; font-weight: 400; padding: 2px 0 0 4px; }
.vbar { grid-row: 1 / 3; grid-column: 2; display: flex; flex-direction: column; align-items: center; padding: 8px 1px 8px; }
.vbar i { margin-top: 10px; width: 12px; height: 69px; border-radius: 6px; background: #d3d6dd; }
.vbar .ico:last-child { margin-top: auto; }
.hbar { grid-row: 2; grid-column: 1; display: flex; align-items: center; padding: 0 8px; gap: 9px; }
.hbar div { flex: 1; }
.hbar i { display: block; width: 81%; height: 12px; border-radius: 6px; background: #d3d6dd; }

.wfoot { height: 30px; flex: none; border-top: 1px solid #e1e3e8; display: flex; align-items: center; padding: 0 15px 1px 14px; }
.navb { gap: 4px; }
.fnav { display: flex; align-items: center; margin-left: 15px; padding-left: 17px; border-left: 1px solid #dcdfe4; height: 16px; }
.fnav input { width: 110px; height: 21px; margin: 0 18px; }
.fnav .ib + .ib { margin-left: 14px; }
.fhist { display: flex; gap: 11px; margin-left: 34px; }
.fright { margin-left: auto; display: flex; align-items: center; }
.fg { display: flex; align-items: center; height: 16px; padding: 0 14px; border-right: 1px solid #dcdfe4; }
.fg .ib { gap: 5px; }
.tight { padding: 0 11px 0 9px; gap: 2px; }
.tight .ib { width: 25px; height: 25px; }
.fzoom { display: flex; align-items: center; padding-left: 11px; gap: 15px; }
.pct { gap: 5px; margin-right: -3px; }
.fzoom .thin { width: 130px; margin-inline: 0; background-size: 50% 2px, 100% 1px; }
.fzoom .ib:last-child { margin-left: -4px; }
</style>
